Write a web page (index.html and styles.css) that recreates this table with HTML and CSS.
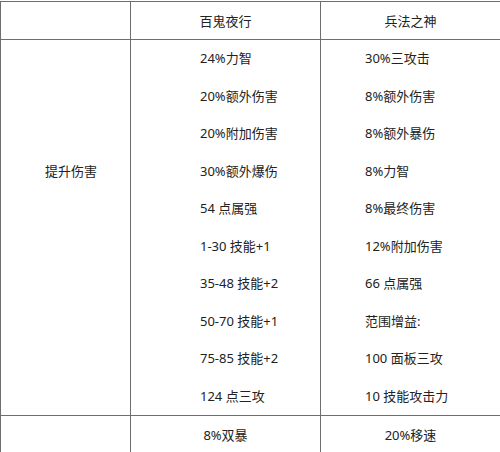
FILE: index.html
```html
<!DOCTYPE html>
<html lang="zh-CN">
<head>
<meta charset="utf-8">
<link rel="stylesheet" href="styles.css">
</head>
<body>
<table class="grid">
  <colgroup>
    <col class="c1">
    <col class="c2">
    <col class="c3">
  </colgroup>
  <tr class="head">
    <td></td>
    <td class="center">百鬼夜行</td>
    <td class="center">兵法之神</td>
  </tr>
  <tr class="body">
    <td class="label"><div class="line">提升伤害</div></td>
    <td class="list list-a">
      <div class="line">24%力智</div>
      <div class="line">20%额外伤害</div>
      <div class="line">20%附加伤害</div>
      <div class="line">30%额外爆伤</div>
      <div class="line">54 点属强</div>
      <div class="line">1-30 技能+1</div>
      <div class="line">35-48 技能+2</div>
      <div class="line">50-70 技能+1</div>
      <div class="line">75-85 技能+2</div>
      <div class="line">124 点三攻</div>
    </td>
    <td class="list list-b">
      <div class="line">30%三攻击</div>
      <div class="line">8%额外伤害</div>
      <div class="line">8%额外暴伤</div>
      <div class="line">8%力智</div>
      <div class="line">8%最终伤害</div>
      <div class="line">12%附加伤害</div>
      <div class="line">66 点属强</div>
      <div class="line">范围增益:</div>
      <div class="line">100 面板三攻</div>
      <div class="line">10 技能攻击力</div>
    </td>
  </tr>
  <tr class="foot">
    <td></td>
    <td class="center">8%双暴</td>
    <td class="center">20%移速</td>
  </tr>
</table>
</body>
</html>
```

FILE: styles.css
```css
html, body {
  margin: 0;
  padding: 0;
  background: #ffffff;
}
body {
  font-family: "Noto Sans", "Noto Sans CJK SC", sans-serif;
  font-size: 13px;
  color: #222222;
  overflow: hidden;
}
.grid {
  margin-top: 1px;
  width: 500px;
  table-layout: fixed;
  border-collapse: collapse;
}
.c1 { width: 130px; }
.c2 { width: 190px; }
.c3 { width: 180px; }
.grid td {
  border: 1px solid #6e6e6e;
  padding: 0;
}
.grid .head td { height: 37px; }
.grid .foot td { height: 37px; }
.grid .center {
  text-align: center;
  vertical-align: middle;
}
.grid .label {
  text-align: center;
  vertical-align: top;
  padding-top: 112.5px;
  padding-left: 11px;
}
.grid .list {
  vertical-align: top;
  text-align: left;
}
.grid .list-a { padding-left: 69px; }
.grid .list-b { padding-left: 44px; }
.line {
  height: 37.5px;
  line-height: 37.5px;
  white-space: nowrap;
}
```
